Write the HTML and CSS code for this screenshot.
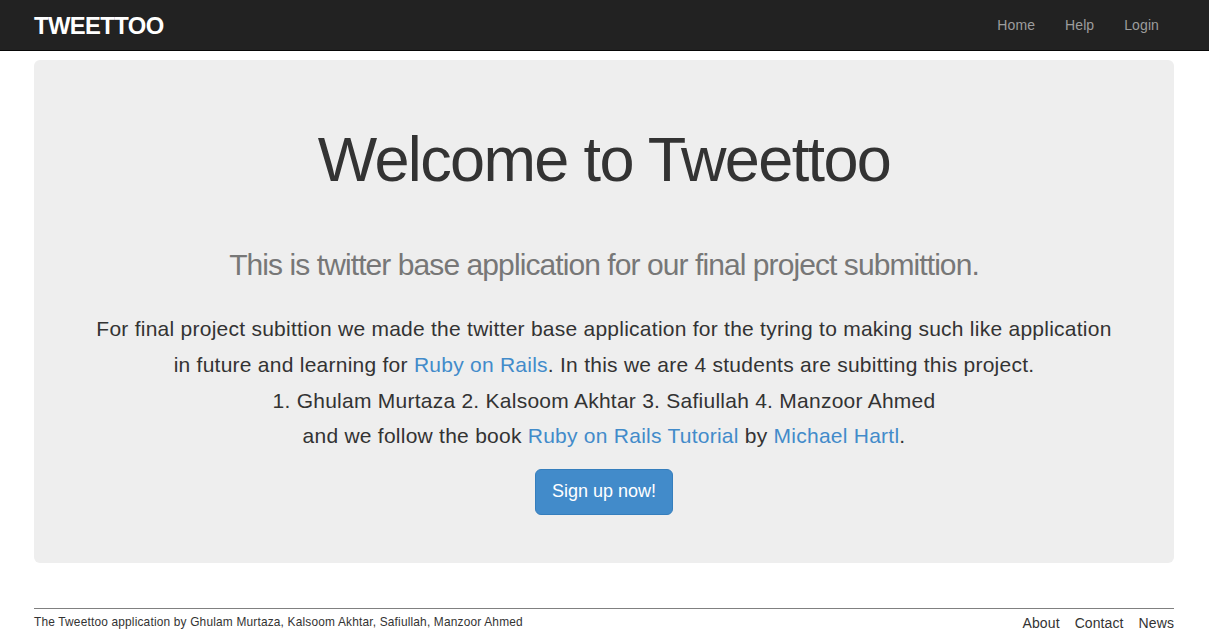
FILE: index.html
```
<!DOCTYPE html>
<html>
<head>
<meta charset="utf-8">
<title>Tweettoo</title>
<link rel="stylesheet" href="styles.css">
</head>
<body>
<header class="navbar">
  <div class="container nav-inner">
    <a class="logo" href="#">Tweettoo</a>
    <ul class="nav">
      <li><a href="#">Home</a></li>
      <li><a href="#">Help</a></li>
      <li><a href="#">Login</a></li>
    </ul>
  </div>
</header>
<main class="container page">
  <section class="jumbotron">
    <h1>Welcome to Tweettoo</h1>
    <h2>This is twitter base application for our final project submittion.</h2>
    <p class="lead">For final project subittion we made the twitter base application for the tyring to making such like application<br>in future and learning for <a href="#">Ruby on Rails</a>. In this we are 4 students are subitting this project.<br>1. Ghulam Murtaza 2. Kalsoom Akhtar 3. Safiullah 4. Manzoor Ahmed<br>and we follow the book <a href="#">Ruby on Rails Tutorial</a> by <a href="#">Michael Hartl</a>.</p>
    <a class="btn" href="#">Sign up now!</a>
  </section>
  <footer class="footer">
    <small class="credits">The Tweettoo application by Ghulam Murtaza, Kalsoom Akhtar, Safiullah, Manzoor Ahmed</small>
    <ul class="footer-nav">
      <li><a href="#">About</a></li>
      <li><a href="#">Contact</a></li>
      <li><a href="#">News</a></li>
    </ul>
  </footer>
</main>
</body>
</html>
```
FILE: styles.css
```
* { box-sizing: border-box; }
html, body { margin: 0; padding: 0; }
body {
  font-family: "Liberation Sans", Arial, Helvetica, sans-serif;
  font-size: 14px;
  line-height: 1.428571;
  color: #333;
  background: #fff;
}
a { text-decoration: none; }
.container {
  width: 1170px;
  margin-left: calc((100% - 1171px) / 2);
  margin-right: auto;
  padding: 0 15px;
}
.navbar {
  background: #222;
  border-bottom: 1px solid #080808;
  height: 51px;
}
.nav-inner {
  display: flex;
  justify-content: space-between;
  align-items: flex-start;
}
.logo {
  color: #fff;
  font-size: 23.8px;
  font-weight: bold;
  text-transform: uppercase;
  letter-spacing: -0.6px;
  padding-top: 9px;
  line-height: 34px;
}
.nav {
  display: flex;
  list-style: none;
  margin: 0;
  padding: 0;
}
.nav a {
  display: block;
  padding: 15px;
  line-height: 20px;
  color: #9d9d9d;
  letter-spacing: 0.1px;
}
.page { padding-top: 9px; }
.jumbotron {
  background: #eee;
  border-radius: 6px;
  padding: 48px 60px;
  text-align: center;
}
.jumbotron h1 {
  font-size: 63px;
  font-weight: 500;
  letter-spacing: -1.63px;
  line-height: 1.1;
  margin: 17px 0 30px;
  color: #333;
}
.jumbotron h2 {
  font-size: 30px;
  font-weight: normal;
  letter-spacing: -0.92px;
  line-height: 1.1;
  color: #777;
  margin: 54px 0 30px;
}
.lead {
  font-size: 21px;
  line-height: 35.7px;
  letter-spacing: 0.25px;
  font-weight: 200;
  margin: 0 0 15px;
}
.lead a { color: #428bca; }
.btn {
  display: inline-block;
  padding: 10px 16px;
  font-size: 18px;
  line-height: 1.33;
  border-radius: 6px;
  background: #428bca;
  border: 1px solid #357ebd;
  color: #fff;
}
.footer {
  margin-top: 45px;
  padding-top: 4px;
  border-top: 1px solid #808080;
  display: flex;
  justify-content: space-between;
  align-items: flex-start;
}
.credits {
  font-size: 11.9px;
  letter-spacing: 0.18px;
  color: #333;
  padding-top: 1px;
}
.footer-nav {
  list-style: none;
  margin: 0;
  padding: 0;
  display: flex;
  gap: 15px;
}
.footer-nav a {
  color: #333;
  line-height: 20px;
  letter-spacing: 0.1px;
}
```
